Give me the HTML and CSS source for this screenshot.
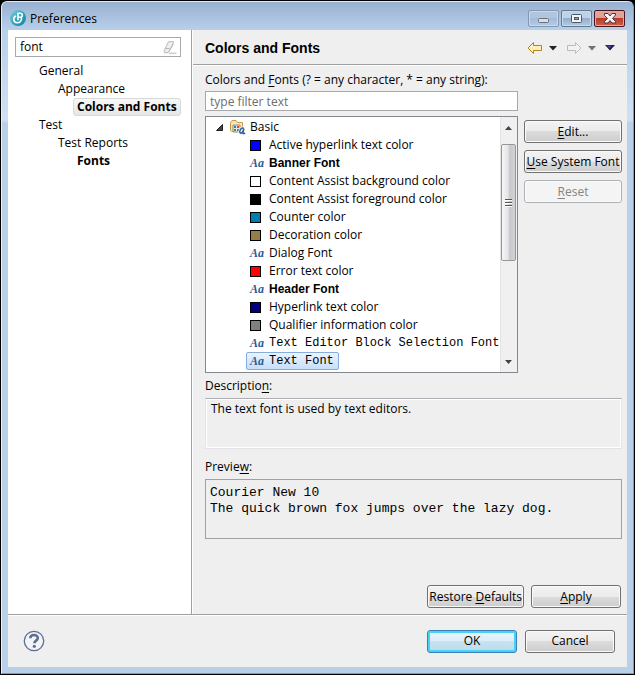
FILE: index.html
```html
<!DOCTYPE html>
<html lang="en">
<head>
<meta charset="utf-8">
<title>Preferences</title>
<link rel="stylesheet" href="styles.css">
</head>
<body>
<div class="window">
  <header class="titlebar">
    <svg class="app-icon" width="18" height="18" viewBox="0 0 18 18" aria-hidden="true">
      <defs><linearGradient id="teal" x1="0" y1="0" x2="1" y2="1"><stop offset="0" stop-color="#8fd3dd"/><stop offset=".5" stop-color="#2fa5bb"/><stop offset="1" stop-color="#1583a0"/></linearGradient></defs>
      <circle cx="9" cy="9" r="8" fill="url(#teal)"/>
      <path d="M6.500 7.200C4 8.500 4 13.500 8 13.800c3 .1 4.600-2 4.500-4.600M9 10.800V4.300h2.300a2 2 0 0 1 0 4H9" fill="none" stroke="#fff" stroke-width="1.600" stroke-linecap="round"/>
    </svg>
    <span class="caption">Preferences</span>
    <div class="window-buttons">
      <button class="wbtn minimize" type="button" aria-label="Minimize"><svg width="29" height="15" viewBox="0 0 29 15"><rect x="9.500" y="7.500" width="10" height="4" rx="1" fill="#ddd" stroke="#66707e"/></svg></button>
      <button class="wbtn" type="button" aria-label="Maximize"><svg width="29" height="15" viewBox="0 0 29 15"><rect x="9.500" y="3.500" width="10" height="8" rx="1" fill="#f4f4f4" stroke="#4b5668"/><rect x="12.500" y="6.500" width="4" height="2" fill="#8faac9" stroke="#4b5668"/></svg></button>
      <button class="wbtn close" type="button" aria-label="Close"><svg width="29" height="15" viewBox="0 0 29 15"><path d="M9.500 2.500h3.500l2 2.500 2-2.500h3.500v1.500L17.500 7.500l3 3V12h-3.500l-2-2.500-2 2.500H9.500v-1.500l3-3-3-3z" fill="#f6f6f6" stroke="#4d3540"/></svg></button>
    </div>
  </header>

  <div class="client">
    <div class="panes">
      <nav class="sidebar" aria-label="Preference pages">
        <div class="search">
          <input class="search-input" type="text" value="font" aria-label="Filter pages">
          <button class="clear" type="button" aria-label="Clear"><svg width="15" height="13" viewBox="0 0 15 13"><path d="M5.500.7h5l-1 4-4.500 7H1.500L1 10z" fill="#efefed" stroke="#bab8b3"/><path d="M2.500 7.500h4M10 3 6 10.500M6 12.200h7.500" fill="none" stroke="#bab8b3"/></svg></button>
        </div>
        <ul class="pages">
          <li><a class="page" href="#general">General</a>
            <ul>
              <li><a class="page" href="#appearance">Appearance</a>
                <ul><li><a class="page match current" href="#colors" aria-current="page">Colors and Fonts</a></li></ul>
              </li>
            </ul>
          </li>
          <li><a class="page" href="#test">Test</a>
            <ul>
              <li><a class="page" href="#reports">Test Reports</a>
                <ul><li><a class="page match" href="#fonts">Fonts</a></li></ul>
              </li>
            </ul>
          </li>
        </ul>
      </nav>

      <main class="content">
        <div class="page-header">
          <h1>Colors and Fonts</h1>
          <div class="toolbar">
            <div class="tool-pair">
              <button class="tool" type="button" aria-label="Back"><svg width="16" height="14" viewBox="0 0 16 14"><path d="M1 7 6.500 1.500V4.500H14.500V9.500H6.500V12.500z" fill="#ffefb8" stroke="#b9811c"/></svg></button>
              <button class="tool" type="button" aria-label="Back history"><svg width="8" height="5" viewBox="0 0 8 5"><path d="M0 0h8L4 4.500z" fill="#222"/></svg></button>
            </div>
            <div class="tool-pair">
              <button class="tool" type="button" aria-label="Forward"><svg width="16" height="14" viewBox="0 0 16 14"><path d="M15 7 9.500 1.500V4.500H1.500V9.500H9.500V12.500z" fill="#f2f2f0" stroke="#bdbdb8"/></svg></button>
              <button class="tool" type="button" aria-label="Forward history"><svg width="8" height="5" viewBox="0 0 8 5"><path d="M0 0h8L4 4.500z" fill="#707070"/></svg></button>
            </div>
            <button class="tool" type="button" aria-label="Menu"><svg width="10" height="6" viewBox="0 0 10 6"><path d="M0 0h10L5 5.500z" fill="#1c1a3a"/><path d="M1.500.5H7L4.500 3.500z" fill="#4a3f9a"/></svg></button>
          </div>
        </div>

        <div class="page-body">
          <label class="label" for="filter">Colors and <u>F</u>onts (? = any character, * = any string):</label>
          <div class="chooser">
            <div class="chooser-list">
              <input class="filter" id="filter" type="text" placeholder="type filter text">
              <div class="tree">
                <div class="tree-items">
                  <div class="row root">
                    <svg width="7" height="7" viewBox="0 0 7 7" aria-hidden="true"><path d="M6.500.5v6h-6z" fill="#444" stroke="#222"/></svg>
                    <svg class="folder" width="16" height="16" viewBox="0 0 16 16" aria-hidden="true"><path d="M.5 11.500V3.500L2 1.500H6L7.500 3.500H12.500V12.500H1.500z" fill="#fbe3a4" stroke="#c99a4b"/><path d="M1.500 5H12" stroke="#fff5d2"/><path d="M3 6h7v7H3z" fill="#e9e9e4" stroke="#8b8b8b"/><path d="M4 7h2v2H4z" fill="#3b78b5"/><path d="M7 7h2v2H7z" fill="#d94a31"/><path d="M4 10h2v2H4z" fill="#3e9a52"/><path d="M7 10h2v2H7z" fill="#3b78b5"/><path d="M13.600 9.300C11.500 8.300 10 10.500 9.800 12.600c0 2.300 2 2 3.200-.5l.9-2.600-1 4.200c0 1.200.9 1.200 2.100.2" fill="none" stroke="#fff" stroke-width="3"/><path d="M13.600 9.300C11.500 8.300 10 10.500 9.800 12.600c0 2.300 2 2 3.200-.5l.9-2.600-1 4.200c0 1.200.9 1.200 2.100.2" fill="none" stroke="#2c5c9c" stroke-width="1.500"/></svg>
                    <span>Basic</span>
                  </div>
                  <ul class="entries">
                    <li class="row"><i class="swatch blue"></i><span>Active hyperlink text color</span></li>
                    <li class="row"><i class="aa">Aa</i><span class="sans">Banner Font</span></li>
                    <li class="row"><i class="swatch white"></i><span>Content Assist background color</span></li>
                    <li class="row"><i class="swatch black"></i><span>Content Assist foreground color</span></li>
                    <li class="row"><i class="swatch teal"></i><span>Counter color</span></li>
                    <li class="row"><i class="swatch brown"></i><span>Decoration color</span></li>
                    <li class="row"><i class="aa">Aa</i><span>Dialog Font</span></li>
                    <li class="row"><i class="swatch red"></i><span>Error text color</span></li>
                    <li class="row"><i class="aa">Aa</i><span class="sans">Header Font</span></li>
                    <li class="row"><i class="swatch navy"></i><span>Hyperlink text color</span></li>
                    <li class="row"><i class="swatch gray"></i><span>Qualifier information color</span></li>
                    <li class="row"><i class="aa">Aa</i><span class="mono">Text Editor Block Selection Font</span></li>
                    <li class="row selected"><i class="aa">Aa</i><span class="mono">Text Font</span></li>
                  </ul>
                </div>
                <div class="scrollbar" aria-hidden="true">
                  <div class="arrow"><svg width="7" height="4" viewBox="0 0 7 4"><path d="M0 4h7L3.500 0z" fill="#444"/></svg></div>
                  <div class="track"><div class="thumb"><svg width="7" height="9" viewBox="0 0 7 9"><path d="M0 1.500h7M0 4.500h7M0 7.500h7" stroke="#555"/><path d="M0 2.500h7M0 5.500h7M0 8.500h7" stroke="#fff"/></svg></div></div>
                  <div class="arrow"><svg width="7" height="4" viewBox="0 0 7 4"><path d="M0 0h7L3.500 4z" fill="#444"/></svg></div>
                </div>
              </div>
            </div>
            <div class="side-buttons">
              <button class="btn" type="button"><u>E</u>dit...</button>
              <button class="btn" type="button"><u>U</u>se System Font</button>
              <button class="btn" type="button" disabled><u>R</u>eset</button>
            </div>
          </div>

          <label class="label section" for="description">Descriptio<u>n</u>:</label>
          <textarea class="description" id="description" readonly>The text font is used by text editors.</textarea>

          <label class="label section" for="preview">Previe<u>w</u>:</label>
          <output class="preview" id="preview">Courier New 10<br>The quick brown fox jumps over the lazy dog.</output>

          <div class="page-actions">
            <button class="btn restore" type="button">Restore <u>D</u>efaults</button>
            <button class="btn" type="button"><u>A</u>pply</button>
          </div>
        </div>
      </main>
    </div>

    <footer class="footer">
      <button class="help" type="button" aria-label="Help"><svg width="22" height="22" viewBox="0 0 22 22"><circle cx="11" cy="11" r="9.700" fill="#f3f4f7" stroke="#5c6f90" stroke-width="1.300"/><path d="M7.300 8.300C7.300 3.800 14.800 4 14.800 8c0 2.700-3.400 2.500-3.400 5.200" fill="none" stroke="#5c6f90" stroke-width="2.600"/><circle cx="11.300" cy="16.300" r="1.600" fill="#5c6f90"/></svg></button>
      <div class="dialog-actions">
        <button class="btn default" type="button">OK</button>
        <button class="btn" type="button">Cancel</button>
      </div>
    </footer>
  </div>
</div>
</body>
</html>
```
FILE: styles.css
```css
* { box-sizing: border-box; }

body {
  display: flex;
  min-height: 100vh;
  margin: 0;
  padding: 1px;
  background: #000;
  color: #000;
  font: 12px/18px "Open Sans", "Noto Sans", sans-serif;
}

button, input, textarea { margin: 0; color: inherit; font: inherit; }
svg { display: block; }
ul { margin: 0; padding: 0; list-style: none; }
u { text-underline-offset: 2px; }

.window {
  display: flex;
  flex: 1;
  flex-direction: column;
  min-width: 0;
  padding: 0 6px 6px;
  border: 1px solid #35bcd2;
  border-top-color: #dce9f6;
  border-left-color: #e6f0fa;
  border-radius: 6px 6px 0 0;
  background: linear-gradient(#98b1d1 0, #b3cbe6 24px, #b9d1ea 30px, #d0e0f3 118px, #b9d0e9 121px);
}

.titlebar { display: flex; align-items: center; height: 28px; padding: 5px 2px 0 1px; }
.app-icon { margin-bottom: 2px; }
.caption { flex: 1; margin-left: 3px; }
.window-buttons { display: flex; gap: 2px; }
.wbtn {
  width: 31px;
  height: 17px;
  padding: 0;
  border: 1px solid #64788f;
  border-radius: 2px;
  background: linear-gradient(#bfd2e8 0 45%, #94aecb 50%, #b2cbe5);
  box-shadow: inset 0 0 0 1px #c8daed;
}
.wbtn.minimize { border-color: #8197b3; background: linear-gradient(#b0c6e0 0 45%, #a3bbd8 50%, #b2cbe5); }
.wbtn.close {
  border-color: #4b1620;
  background: linear-gradient(#dfa297 0 45%, #b93a28 50%, #d0604a);
  box-shadow: inset 0 0 0 1px #e6a99f;
}

.client { display: flex; flex: 1; flex-direction: column; background: #efefef; }
.panes { display: flex; flex: 1; }

.sidebar { width: 184px; padding: 7px 10px 0 7px; border-right: 1px solid #a0a0a0; background: #fff; }
.search { display: flex; align-items: center; height: 20px; padding-right: 2px; border: 1px solid #a9a9ad; }
.search-input { flex: 1; min-width: 0; height: 18px; padding: 0 4px; border: 0; outline: 0; background: none; }
.clear, .tool, .help { padding: 0; border: 0; background: none; }
.pages { padding: 5px 0 0 20px; }
.pages ul { padding-left: 19px; }
.page {
  display: block;
  width: max-content;
  height: 18px;
  padding: 0 3px;
  border: 1px solid transparent;
  border-radius: 3px;
  color: #000;
  line-height: 16px;
  text-decoration: none;
  white-space: nowrap;
}
.match { font-weight: 700; }
.current { border-color: #d9d9d9; background: linear-gradient(#f8f8f8, #e6e6e6); }

.content { display: flex; flex: 1; flex-direction: column; min-width: 0; border-left: 1px solid #fff; }
.page-header {
  display: flex;
  align-items: center;
  justify-content: space-between;
  height: 35px;
  padding: 2px 12px 0;
  border-bottom: 1px solid #a0a0a0;
  box-shadow: 0 1px 0 #fff;
}
h1 { margin: 0; font: 700 14px/18px "Liberation Sans", sans-serif; }
.toolbar { display: flex; align-items: center; gap: 9px; }
.tool-pair { display: flex; align-items: center; gap: 6px; }

.page-body { display: flex; flex: 1; flex-direction: column; padding: 6px 5px 6px 12px; }
.label { display: block; height: 18px; white-space: nowrap; }
.chooser { display: flex; gap: 6px; margin-top: 2px; }
.chooser-list { flex: 1; min-width: 0; }
.filter { display: block; width: 100%; height: 20px; padding: 0 4px; border: 1px solid #a9a9ad; outline: 0; background: #fff; }
.filter::placeholder { color: #6d6d6d; opacity: 1; }
.tree { display: flex; height: 257px; margin-top: 5px; border: 1px solid #828790; background: #fff; }
.tree-items { flex: 1; min-width: 0; padding-top: 1px; overflow: hidden; }
.row { display: flex; align-items: center; height: 18px; white-space: nowrap; }
.root { padding-left: 10px; }
.folder { margin: 0 4px 0 7px; }
.entries { padding-left: 40px; }
.entries .row { width: max-content; padding: 0 4px 0 3px; border: 1px solid transparent; border-radius: 2px; }
.entries .selected { border-color: #84acdd; background: linear-gradient(#ebf3fd, #c7dffb); }
.swatch { width: 11px; height: 11px; margin-right: 8px; border: 1px solid #000; }
.aa { width: 15px; margin-right: 4px; color: #2f5a93; font: italic 700 12px/16px "Liberation Serif", serif; }
.sans { font: 700 12px/16px "Liberation Sans", sans-serif; }
.mono { font: 12px/16px "Liberation Mono", monospace; }
.blue { background: #00f; }
.white { background: #fff; }
.black { background: #000; }
.teal { background: #007fae; }
.brown { background: #957d47; }
.red { background: #f00; }
.navy { background: #000080; }
.gray { background: #808080; }

.scrollbar { display: flex; flex-direction: column; width: 17px; padding: 1px; background: #f0f0f0; box-shadow: inset 1px 0 0 #e3e3e3; }
.arrow { display: grid; place-items: center; height: 19px; }
.track { flex: 1; padding-top: 7px; }
.thumb {
  display: grid;
  place-items: center;
  height: 117px;
  border: 1px solid #979797;
  border-radius: 2px;
  background: linear-gradient(90deg, #f5f5f5, #e6e6e8 45%, #c8c8cc 60%, #d3d3d6);
}

.side-buttons { display: flex; flex-direction: column; gap: 7px; width: 98px; padding-top: 29px; }
.btn {
  min-width: 90px;
  height: 23px;
  padding: 0 1px;
  border: 1px solid #707070;
  border-radius: 3px;
  background: linear-gradient(#f3f3f3, #ebebeb 50%, #dcdcdc 50%, #cdcdcd);
  box-shadow: inset 0 0 0 1px #fbfbfb;
  line-height: 20px;
  white-space: nowrap;
}
.btn:disabled { border-color: #adb2b5; background: #f4f4f4; color: #838383; }
.default {
  border-color: #3c7fb1;
  background: linear-gradient(#eaf4fa, #dceef7 50%, #c7e2f0 50%, #bddbea);
  box-shadow: inset 0 0 0 2px #45d2f5;
}

.section { margin-top: 4px; }
.description {
  display: block;
  width: 100%;
  height: 51px;
  margin-top: 3px;
  padding: 1px 5px;
  border: 1px solid #e3e3e8;
  border-top-color: #abadb3;
  outline: 0;
  background: #efefef;
  box-shadow: inset 0 0 0 1px #fff;
  resize: none;
}
.description + .section { margin-top: 9px; }
.preview { display: block; height: 60px; margin-top: 3px; padding: 5px 4px; border: 1px solid #a0a0a0; font: 13px/16px "Liberation Mono", monospace; }

.page-actions { display: flex; justify-content: flex-end; gap: 7px; margin-top: auto; padding-right: 1px; }
.restore { min-width: 95px; }

.footer {
  display: flex;
  align-items: center;
  justify-content: space-between;
  height: 53px;
  padding: 0 12px 0 15px;
  border-top: 1px solid #a0a0a0;
  box-shadow: inset 0 1px 0 #fff;
}
.dialog-actions { display: flex; gap: 8px; }
```
